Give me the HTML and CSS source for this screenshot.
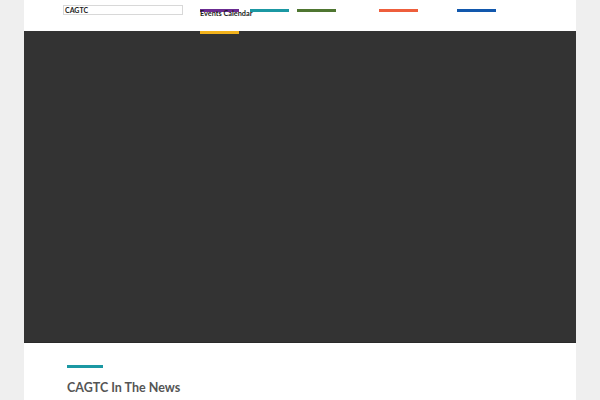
FILE: index.html
```html
<!DOCTYPE html>
<html>
<head>
<meta charset="utf-8">
<link rel="stylesheet" href="styles.css">
</head>
<body>
<div class="page">
  <header class="header">
    <div class="search"><span class="search-text">CAGTC</span></div>
    <ul class="nav">
      <li class="item item-1 purple"><span class="bar"></span><span class="label">Events Calendar</span><span class="drop"></span></li>
      <li class="item item-2 teal"><span class="bar"></span></li>
      <li class="item item-3 green"><span class="bar"></span></li>
      <li class="item item-4 orange"><span class="bar"></span></li>
      <li class="item item-5 blue"><span class="bar"></span></li>
    </ul>
  </header>
  <div class="hero"></div>
  <section class="news">
    <div class="rule"></div>
    <h2 class="title">CAGTC In The News</h2>
  </section>
</div>
</body>
</html>
```
FILE: styles.css
```css
html, body {
  margin: 0;
  padding: 0;
  background: #efefef;
  height: 400px;
  overflow: hidden;
}
.page {
  margin: 0 24px;
  background: #ffffff;
  height: 400px;
  font-family: "Source Sans Pro", Lato, "Noto Sans", "Liberation Sans", sans-serif;
}
.header {
  height: 31px;
  display: flex;
  align-items: flex-start;
  position: relative;
}
.search {
  margin: 5px 0 0 39px;
  width: 117px;
  height: 8px;
  border: 1px solid #d8d8d8;
  display: flex;
  align-items: center;
  padding: 0 0 0 1px;
}
.search-text {
  font-size: 7px;
  font-weight: 700;
  color: #222;
  line-height: 8px;
}
.nav {
  list-style: none;
  margin: 0 0 0 17px;
  padding: 0;
  display: flex;
}
.item {
  position: relative;
  padding-top: 9px;
  height: 22px;
}
.item-1 { width: 50px; }
.item-2 { width: 47px; }
.item-3 { width: 82px; }
.item-4 { width: 78px; }
.item-5 { width: 40px; }
.bar {
  display: block;
  width: 39px;
  height: 3px;
}
.purple .bar { background: #6b2c91; }
.teal .bar { background: #1b98a3; }
.green .bar { background: #4f7631; }
.orange .bar { background: #ee5e3c; }
.blue .bar { background: #1258ad; }
.label {
  position: absolute;
  left: 0;
  top: 9px;
  font-size: 7.3px;
  font-weight: 700;
  color: #1c1c1c;
  white-space: nowrap;
  line-height: 9px;
}
.drop {
  position: absolute;
  left: 0;
  top: 31px;
  width: 39px;
  height: 3px;
  background: #f2b21c;
  z-index: 2;
}
.hero {
  height: 311px;
  background: #333333;
  border-bottom: 1px solid #2a2a2a;
}
.news {
  padding: 22px 0 0 43px;
}
.rule {
  width: 36px;
  height: 3px;
  background: #1b98a3;
}
.title {
  margin: 11px 0 0 0;
  font-size: 12.5px;
  font-weight: 700;
  color: #555555;
  line-height: 18px;
}
```
